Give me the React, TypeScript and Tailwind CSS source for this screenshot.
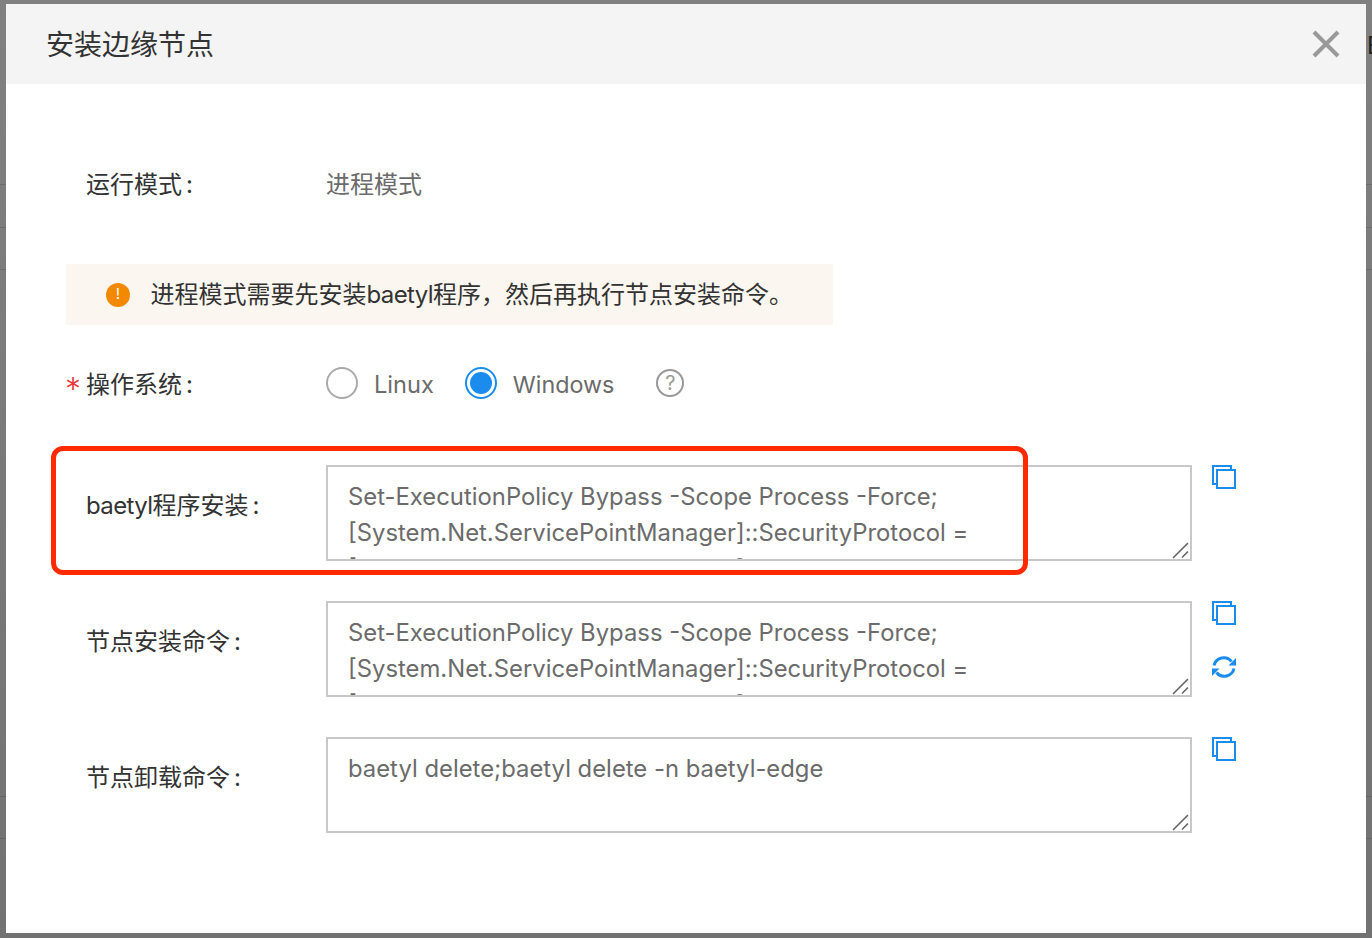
import { useMemo } from 'react'

const cjk = 'font-["Inter","Noto_Sans_CJK_SC",sans-serif]'

const installCmd =
  'Set-ExecutionPolicy Bypass -Scope Process -Force; [System.Net.ServicePointManager]::SecurityProtocol = [System.Net.ServicePointManager]::SecurityProtocol -bor 3072; iex ((New-Object System.Net.WebClient))'

function CopyIcon() {
  return (
    <svg width="24" height="24" viewBox="0 0 24 24" fill="none" stroke="#1a8cee" strokeWidth="2">
      <path d="M19 4V1H1V19H4" />
      <rect x="5" y="5" width="18" height="18" fill="#fff" />
    </svg>
  )
}

function RefreshIcon() {
  return (
    <svg width="24" height="24" viewBox="0 0 24 24" fill="none" stroke="#1a8cee" strokeWidth="3">
      <path d="M2 10.5A10 10 0 0 1 19.5 6.5" />
      <path d="M22 13.5A10 10 0 0 1 4.5 17.5" />
      <path d="M24 3V10.5H16.5Z" fill="#1a8cee" stroke="none" />
      <path d="M0 21V13.5H7.5Z" fill="#1a8cee" stroke="none" />
    </svg>
  )
}

function ResizeHandle() {
  return (
    <svg className="absolute right-0 bottom-0" width="18" height="18" viewBox="0 0 18 18" stroke="#666" strokeWidth="1.6">
      <path d="M1 17L16 2M10 16.5L16 10.5" />
    </svg>
  )
}

function Colon() {
  return <span className="ml-[4px]">:</span>
}

function CommandRow({ label, text, refresh }: { label: React.ReactNode; text: string; refresh?: boolean }) {
  return (
    <div className="flex h-[96px]">
      <div className="w-[260px] pl-[20px] pt-[23px] text-[24px] leading-[36px] text-[#333]">{label}<Colon /></div>
      <div className="relative w-[866px] h-[96px] border-2 border-[#c8c8c8] overflow-hidden pl-[20px] pr-[21px] pt-[12px] text-[23.85px] leading-[35.8px] text-[#6b6b6b]">
        {text}
        <ResizeHandle />
      </div>
      <div className="ml-[20px] flex flex-col gap-[30px]">
        <CopyIcon />
        {refresh && <RefreshIcon />}
      </div>
    </div>
  )
}

export default function App() {
  const backdropRows = useMemo(() => [0, 1, 2], [])

  return (
    <div className={`relative w-[1372px] h-[938px] overflow-hidden bg-linear-to-b from-[#808080] to-[#727272] pl-[6px] pt-[4px] ${cjk}`}>
      {/* page behind the dialog, only visible in the thin strips at the sides */}
      <div className="absolute inset-0 pt-[184px]">
        {backdropRows.map(i => (
          <div key={i} className="h-[42.5px] border-t border-[#6c6c6c]" />
        ))}
        <div className="mt-[484px] h-[42px] border-t border-[#666]" />
        <div className="h-[42px] border-t border-[#666]" />
      </div>
      <span className="absolute left-[1367px] top-[28px] text-[24px] text-[#222]">E</span>

      <div className="relative w-[1360px] h-[929px] bg-white">
        <div className="flex items-center justify-between h-[80px] bg-[#f4f4f4] pl-[40px] pr-[26px]">
          <span className="text-[28px] text-[#333] pt-[2px]">安装边缘节点</span>
          <svg width="28" height="28" viewBox="0 0 28 28" stroke="#999" strokeWidth="4">
            <path d="M2 2L26 26M26 2L2 26" />
          </svg>
        </div>

        <div className="pl-[60px] pt-[82px]">
          <div className="flex h-[36px] items-center text-[24px]">
            <div className="w-[260px] pl-[20px] pt-[1px] text-[#333]">运行模式<Colon /></div>
            <div className="pt-[1px] text-[#6b6b6b]">进程模式</div>
          </div>

          <div className="mt-[62px] flex items-center w-[767px] h-[61px] bg-[#fbf6f0] pl-[40px]">
            <div className="w-[24px] h-[24px] rounded-full bg-[#f38900] flex items-center justify-center text-white text-[15px]">!</div>
            <span className="ml-[20.5px] text-[24px] text-[#333]">
              进程模式需要先安装<span className="tracking-[-0.6px]">baetyl</span>程序，然后再执行节点安装命令。
            </span>
          </div>

          <div className="mt-[40px] flex h-[36px] items-center">
            <div className="w-[260px] pl-[20px] pt-[4px] relative text-[24px] text-[#333]">
              <span className="absolute left-[-1px] top-[9px] text-[32px] leading-[36px] font-light text-[#e8383d]">*</span>
              操作系统<Colon />
            </div>
            <div className="w-[32px] h-[32px] rounded-full border-2 border-[#aaa]" />
            <span className="ml-[16px] pt-[4px] text-[23.6px] text-[#6b6b6b]">Linux</span>
            <div className="ml-[31px] w-[32px] h-[32px] rounded-full border-2 border-[#1a8cee] flex items-center justify-center">
              <div className="w-[22px] h-[22px] rounded-full bg-[#1a8cee]" />
            </div>
            <span className="ml-[16px] pt-[4px] text-[23.3px] text-[#6b6b6b]">Windows</span>
            <div className="ml-[42px] w-[28px] h-[28px] rounded-full border-2 border-[#999] flex items-center justify-center text-[20px] text-[#999]">?</div>
          </div>

          <div className="mt-[64px] flex flex-col gap-[40px]">
            <CommandRow label={<><span className="tracking-[-0.6px]">baetyl</span>程序安装</>} text={installCmd} />
            <CommandRow label="节点安装命令" text={installCmd} refresh />
            <CommandRow label="节点卸载命令" text="baetyl delete;baetyl delete -n baetyl-edge" />
          </div>
        </div>
      </div>

      <div className="absolute left-[51px] top-[446px] w-[977px] h-[129px] rounded-[12px] border-[5px] border-[#ff2a00]" />
    </div>
  )
}
